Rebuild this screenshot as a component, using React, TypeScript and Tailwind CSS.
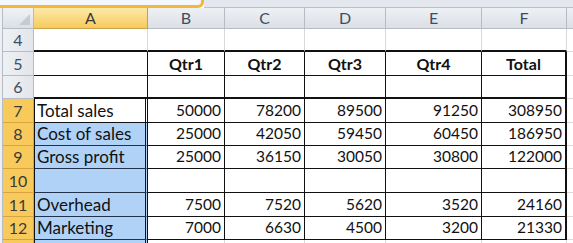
import React from "react";

const COLS = [
  { key: "A", w: 114 },
  { key: "B", w: 77 },
  { key: "C", w: 80 },
  { key: "D", w: 81 },
  { key: "E", w: 96 },
  { key: "F", w: 85 },
];

type Row = { n: number; h: number; label?: string; vals?: (string | number)[]; head?: boolean };

const ROWS: Row[] = [
  { n: 4, h: 23 },
  { n: 5, h: 24, head: true, vals: ["Qtr1", "Qtr2", "Qtr3", "Qtr4", "Total"] },
  { n: 6, h: 23 },
  { n: 7, h: 24, label: "Total sales", vals: [50000, 78200, 89500, 91250, 308950] },
  { n: 8, h: 23, label: "Cost of sales", vals: [25000, 42050, 59450, 60450, 186950] },
  { n: 9, h: 23, label: "Gross profit", vals: [25000, 36150, 30050, 30800, 122000] },
  { n: 10, h: 24 },
  { n: 11, h: 24, label: "Overhead", vals: [7500, 7520, 5620, 3520, 24160] },
  { n: 12, h: 23, label: "Marketing", vals: [7000, 6630, 4500, 3200, 21330] },
  { n: 13, h: 10 },
];

const font = { fontFamily: "Lato, 'Open Sans', sans-serif" };

export default function App() {
  return (
    <div className="w-[573px] h-[243px] overflow-hidden bg-white text-[#111]" style={font}>
      {/* top strip */}
      <div className="flex h-[8px]">
        <div className="w-[204px] h-[8px] bg-[#f3f6fb] border-r-[3px] border-b-[3px] border-[#f5b73a] rounded-br-[6px]" />
        <div className="flex-1 h-[8px] bg-[#e4e8ee] border-b border-[#b9c1cc]" />
      </div>
      {/* header row */}
      <div className="flex h-[21px]">
        <div className="w-[3px] bg-[#eef0f3] border-r border-[#b7bcc4]" />
        <div className="w-[31px] bg-gradient-to-b from-[#f0f2f5] to-[#dbe0e6] border-r border-b border-[#b7bcc4] relative">
          <div className="absolute right-[3px] bottom-[3px] w-0 h-0 border-l-[11px] border-l-transparent border-b-[11px] border-b-[#c6cbd2]" />
        </div>
        {COLS.map((c) => (
          <div
            key={c.key}
            style={{ width: c.w }}
            className={
              "flex items-center justify-center text-[16px] border-r border-b " +
              (c.key === "A"
                ? "bg-gradient-to-b from-[#fbe9a6] to-[#f6cb5a] border-[#c8a14a] text-[#3a3a3a]"
                : "bg-gradient-to-b from-[#eef1f4] to-[#dbe0e6] border-[#b7bcc4] text-[#3d4d63]")
            }
          >
            {c.key}
          </div>
        ))}
        <div className="flex-1 bg-gradient-to-b from-[#eef1f4] to-[#dbe0e6] border-b border-[#b7bcc4]" />
      </div>
      {ROWS.map((r) => {
        const sel = r.n >= 7;
        const inTable = r.n >= 5 && r.n <= 12;
        return (
          <div key={r.n} className="flex" style={{ height: r.h }}>
            <div className="w-[3px] bg-[#eef0f3] border-r border-[#b7bcc4]" />
            <div
              className={
                "w-[31px] flex items-center justify-center text-[16px] border-r border-b " +
                (sel
                  ? "bg-[#f8ca5c] border-[#d9a440] text-[#3a3a3a]"
                  : "bg-gradient-to-r from-[#eef1f4] to-[#e2e6eb] border-[#b7bcc4] text-[#3d4d63]")
              }
            >
              {r.n <= 12 ? r.n : ""}
            </div>
            {COLS.map((c, i) => {
              let cls = "flex items-end pb-[1px] ";
              const isA = i === 0;
              const isLast = i === COLS.length - 1;
              if (r.n === 4) {
                cls += "border-r border-[#d9d9d9] border-b-2 border-b-[#111] ";
              } else if (inTable) {
                cls += r.n === 6 ? "border-b-2 " : "border-b ";
                cls += isLast ? "border-r-2 " : "border-r ";
                cls += "border-[#111] ";
              } else {
                cls += "border-r border-b border-[#d9d9d9] ";
              }
              if (isA && sel) {
                cls += r.n === 7 ? "bg-white " : "bg-[#b0d2f6] ";
                cls += "border-l border-l-[#111] border-r-[3px] border-double border-r-[#111] ";
                if (r.n > 7) cls += "border-b-[#23324a] ";
              }
              if (r.head) {
                cls += "justify-center font-bold text-[16px] ";
              } else if (isA) {
                cls += "pl-[2px] text-[17px] ";
              } else {
                cls += "justify-end pr-[3px] text-[15.5px] ";
              }
              const vv = r.head ? (isA ? "" : r.vals![i - 1]) : isA ? r.label : r.vals ? r.vals[i - 1] : undefined;
              return (
                <div key={c.key} style={{ width: c.w }} className={cls + "leading-[21px] whitespace-nowrap"}>
                  {vv}
                </div>
              );
            })}
            <div className="flex-1 border-b border-[#d9d9d9]" />
          </div>
        );
      })}
    </div>
  );
}
